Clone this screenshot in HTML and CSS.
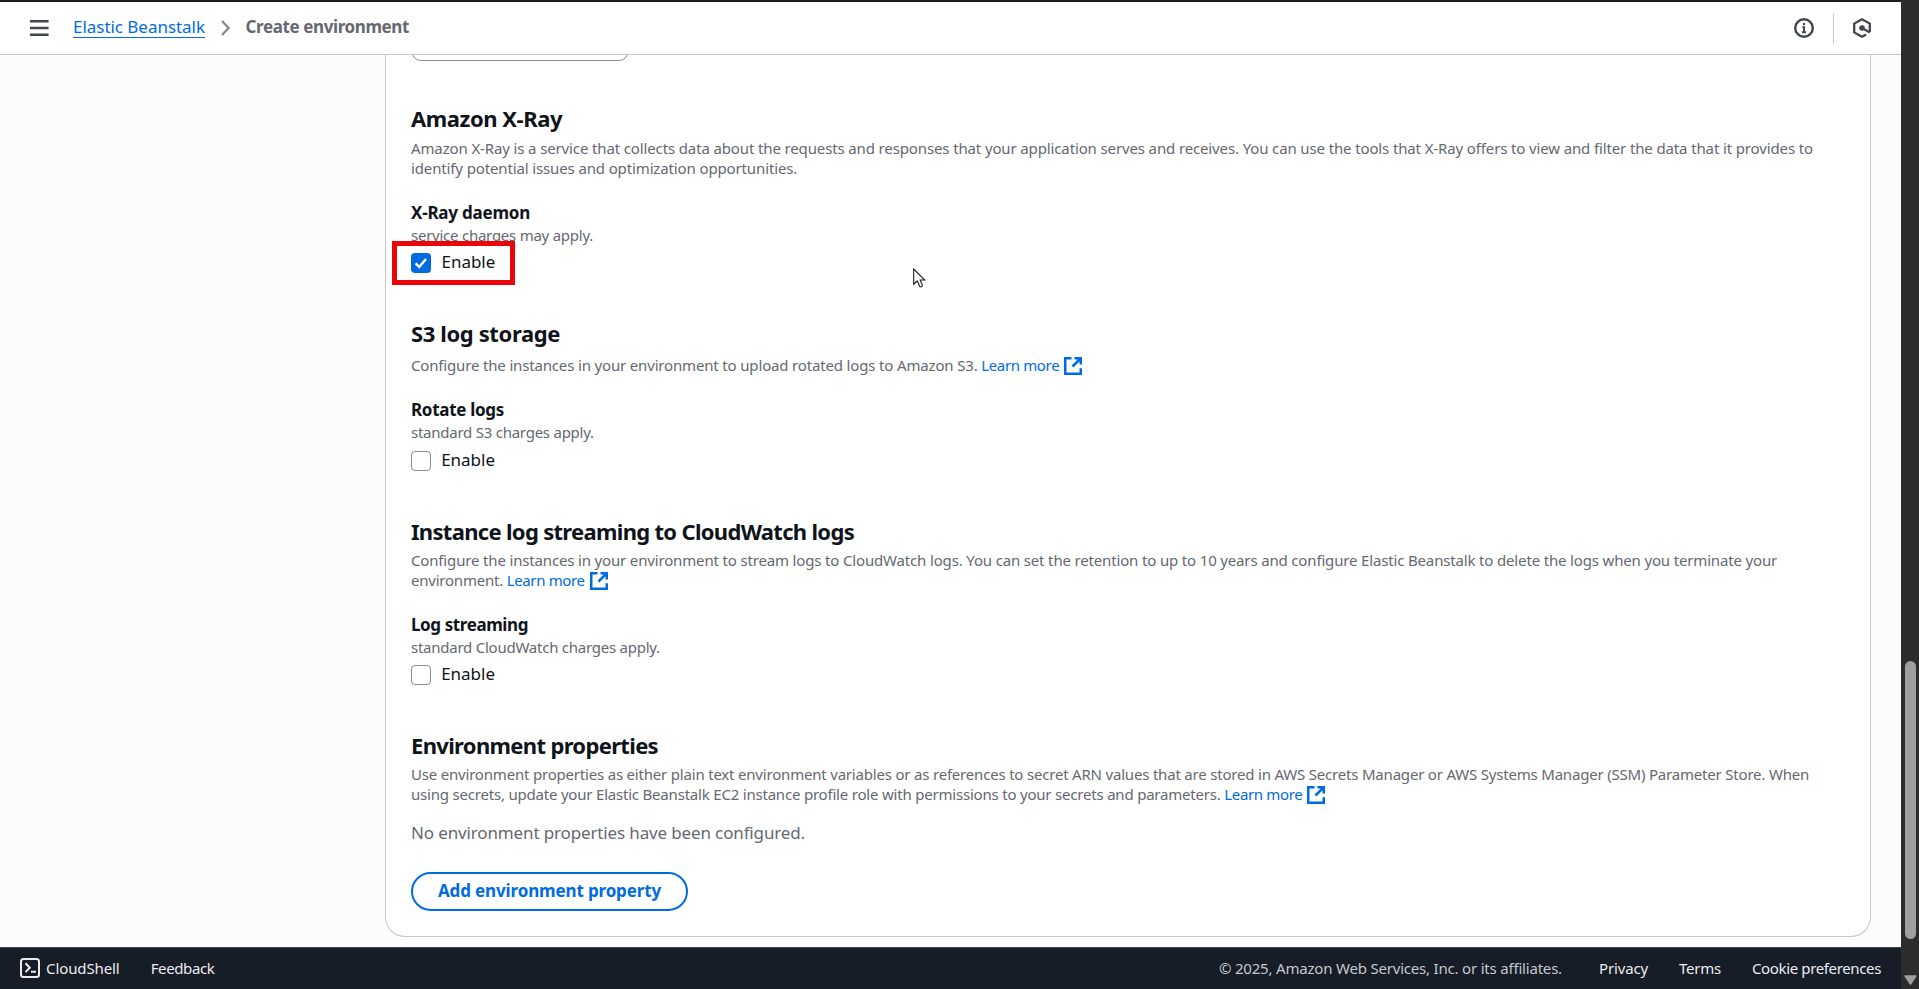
FILE: index.html
```html
<!DOCTYPE html>
<html lang="en">
<head>
<meta charset="utf-8">
<title>Create environment</title>
<link rel="stylesheet" href="styles.css">
</head>
<body>
<svg class="defs" width="0" height="0">
  <symbol id="external" viewBox="0 0 18 18">
    <path d="M7.5 1.25H1.25v15.5h15.5v-5.5M10.5 1.25h6.25V7.5M16.5 1.5 8.5 9.5" fill="none" stroke="currentColor" stroke-width="2.5"/>
  </symbol>
</svg>
<div class="app">
  <div class="page">
    <header class="topbar">
      <svg class="menu" viewBox="0 0 19 16"><path d="M0 1.25h18.6M0 8h18.6M0 14.75h18.6" stroke="#424650" stroke-width="2.3"/></svg>
      <a class="crumb" href="#">Elastic Beanstalk</a>
      <svg class="chevron" viewBox="0 0 11 16"><path d="M2 1l6.5 7L2 15" fill="none" stroke="#8c8c94" stroke-width="2.5"/></svg>
      <span class="crumb-current">Create environment</span>
      <div class="tools">
        <svg class="tool" viewBox="0 0 20 20"><circle cx="10" cy="10" r="8.8" fill="none" stroke="#424650" stroke-width="2.4"/><path d="M10 5v2.2M8.3 9.2H10.1v5.6M8 14.2h4" fill="none" stroke="#424650" stroke-width="2"/></svg>
        <span class="divider"></span>
        <svg class="tool hex" viewBox="0 0 20 20"><path d="M17.8 14V5.6L10 1.3 2.2 5.6v8.8l7.8 4.3 4.2-2.3M10 10l7.8 4.4" fill="none" stroke="#424650" stroke-width="2.3"/><circle cx="10" cy="10" r="2.8" fill="#424650"/></svg>
      </div>
    </header>
    <main class="content">
      <div class="card">
        <div class="select-end"><div class="select"></div></div>

        <section class="first">
          <h2 class="h-xray">Amazon X-Ray</h2>
          <p class="desc">
            <span class="line l1">Amazon X-Ray is a service that collects data about the requests and responses that your application serves and receives. You can use the tools that X-Ray offers to view and filter the data that it provides to</span>
            <span class="line l1">identify potential issues and optimization opportunities.</span>
          </p>
          <h3 class="t-daemon">X-Ray daemon</h3>
          <p class="hint">service charges may apply.</p>
          <label class="check"><span class="box on"><svg viewBox="0 0 20 20"><path d="M4.6 10.4l3.6 3.6L15 6" fill="none" stroke="#fff" stroke-width="2.5"/></svg></span>Enable<i class="highlight"></i></label>
        </section>

        <section class="storage">
          <h2 class="h-storage">S3 log storage</h2>
          <p class="desc">
            <span class="line l2">Configure the instances in your environment to upload rotated logs to Amazon S3. <a href="#">Learn more<svg class="ext"><use href="#external"/></svg></a></span>
          </p>
          <h3 class="t-rotate">Rotate logs</h3>
          <p class="hint">standard S3 charges apply.</p>
          <label class="check"><span class="box"></span>Enable</label>
        </section>

        <section class="streaming">
          <h2 class="h-stream">Instance log streaming to CloudWatch logs</h2>
          <p class="desc">
            <span class="line l3">Configure the instances in your environment to stream logs to CloudWatch logs. You can set the retention to up to 10 years and configure Elastic Beanstalk to delete the logs when you terminate your</span>
            <span class="line l6">environment. <a href="#">Learn more<svg class="ext"><use href="#external"/></svg></a></span>
          </p>
          <h3 class="t-stream">Log streaming</h3>
          <p class="hint">standard CloudWatch charges apply.</p>
          <label class="check"><span class="box"></span>Enable</label>
        </section>

        <section class="props">
          <h2 class="h-props">Environment properties</h2>
          <p class="desc">
            <span class="line l4">Use environment properties as either plain text environment variables or as references to secret ARN values that are stored in AWS Secrets Manager or AWS Systems Manager (SSM) Parameter Store. When</span>
            <span class="line l5">using secrets, update your Elastic Beanstalk EC2 instance profile role with permissions to your secrets and parameters. <a href="#">Learn more<svg class="ext"><use href="#external"/></svg></a></span>
          </p>
          <p class="empty">No environment properties have been configured.</p>
          <button class="add" type="button">Add environment property</button>
        </section>
      </div>
      <svg class="cursor" viewBox="0 0 13 20"><path d="M.7 1v15.2l3.5-3.2 2.6 5.6c1.4.5 2.4 0 2.6-1.2L7.2 12h4.6z" fill="#fff" stroke="#1a1a24" stroke-width="1.1"/></svg>
    </main>
    <footer class="footer">
      <svg class="shell" viewBox="0 0 20 20"><rect x="1" y="1" width="18" height="18" rx="2.5" fill="none" stroke="#ebebf0" stroke-width="2"/><path d="M5.5 5.3l4.3 4.4-4.3 4.4M11 13.8h5" fill="none" stroke="#ebebf0" stroke-width="2"/></svg>
      <a class="f-shell">CloudShell</a>
      <a class="f-feedback">Feedback</a>
      <span class="copy">© 2025, Amazon Web Services, Inc. or its affiliates.</span>
      <a class="f-privacy">Privacy</a>
      <a class="f-terms">Terms</a>
      <a class="f-cookie">Cookie preferences</a>
    </footer>
  </div>
  <div class="scrollbar">
    <div class="thumb"></div>
    <svg class="down" viewBox="0 0 13 10"><path d="M1.2 1h10.6L6.5 9z" fill="#9f9f9f" stroke="#9f9f9f" stroke-width="1.6" stroke-linejoin="round"/></svg>
  </div>
</div>
</body>
</html>
```

FILE: styles.css
```css
* { box-sizing: border-box; }
body, h2, h3, p { margin: 0; }
body {
  font-family: "Noto Sans", "Open Sans", sans-serif;
  font-size: 17px;
  color: #0f141a;
  background: #fcfcfd;
  overflow: hidden;
}
a { color: #006ce0; text-decoration: none; }
.defs { position: absolute; }
.app { display: flex; width: 1919px; height: 989px; }
.page { display: flex; flex-direction: column; width: 1901px; }

.topbar {
  display: flex;
  align-items: center;
  height: 55px;
  padding-left: 30px;
  border-top: 2px solid #1b1c28;
  border-bottom: 1px solid #c6c6cd;
  background: #fff;
  white-space: nowrap;
}
.menu { width: 19px; height: 16px; margin-right: 24px; }
.crumb {
  height: 21px;
  line-height: 19px;
  border-bottom: 1px solid #006ce0;
  letter-spacing: -.034px;
  margin-top: -1px;
}
.chevron { width: 11px; height: 16px; margin: 0 15px 0 14.5px; }
.crumb-current { font-weight: 700; color: #656871; line-height: 20px; letter-spacing: -.39px; margin-top: -2px; }
.tools { display: flex; align-items: center; margin-left: auto; padding-right: 29px; }
.tool { width: 20px; height: 20px; }
.divider { width: 1px; height: 31px; margin: 0 18px 0 19px; background: #c6c6cd; }

.content { position: relative; height: 892px; padding-left: 385px; }
.card {
  width: 1486px;
  height: 882px;
  padding: 0 25px;
  background: #fff;
  border: 1px solid #c6c6cd;
  border-top: 0;
  border-radius: 0 0 20px 20px;
}
.select-end { display: flex; align-items: flex-end; width: 218px; height: 6px; overflow: hidden; }
.select { flex: none; width: 218px; height: 40px; border: 1px solid #8c8c94; border-radius: 10px; }
.first { margin-top: 43px; }
.storage, .streaming, .props { margin-top: 46px; }

h2 { font-size: 22px; font-weight: 700; line-height: 28px; white-space: nowrap; }
.h-xray { letter-spacing: -.452px; }
.h-storage { letter-spacing: -.379px; }
.h-stream { letter-spacing: -.687px; }
.h-props { letter-spacing: -.663px; }

.desc { margin-top: 5px; font-size: 15px; line-height: 20px; color: #656871; }
.first .desc { margin-top: 6px; }
.storage .desc { margin-top: 8px; }
.line { display: block; height: 20px; white-space: nowrap; }
.line a { letter-spacing: -.356px; }
.l1 { letter-spacing: -.131px; }
.l2 { letter-spacing: -.162px; }
.l3 { letter-spacing: -.159px; }
.l4 { letter-spacing: -.195px; }
.l5 { letter-spacing: -.202px; }
.l6 { letter-spacing: -.22px; }
.ext { width: 18px; height: 18px; margin-left: 5px; vertical-align: -4px; }

h3 { margin-top: 24px; font-size: 17px; font-weight: 700; line-height: 22px; letter-spacing: -.218px; }
.t-rotate { letter-spacing: -.296px; }
.t-stream { letter-spacing: -.404px; }
.hint { margin-top: 1px; font-size: 15px; line-height: 20px; letter-spacing: -.245px; color: #656871; }

.check { position: relative; display: flex; gap: 10.5px; width: 84px; margin-top: 8px; line-height: 18px; height: 20px; letter-spacing: -.02px; }
.storage .check { margin-top: 9px; }
.box { width: 20px; height: 20px; border: 1px solid #8c8c94; border-radius: 4px; background: #fff; }
.box.on { border: 0; background: #006ce0; }
.box svg { display: block; width: 20px; height: 20px; }
.highlight { position: absolute; left: -19px; top: -12px; width: 123px; height: 44px; border: 5px solid #eb0509; }

.empty { margin-top: 18px; line-height: 22px; letter-spacing: -.14px; color: #656871; }
.add {
  display: block;
  width: 277px;
  height: 39px;
  margin-top: 28px;
  padding: 0 0 2px;
  border: 2px solid #006ce0;
  border-radius: 20px;
  background: #fff;
  color: #006ce0;
  font: 700 17px/22px "Noto Sans", sans-serif;
  letter-spacing: -.14px;
}
.cursor { position: absolute; left: 913px; top: 213px; width: 13px; height: 20px; }

.footer {
  display: flex;
  align-items: center;
  height: 42px;
  padding: 0 20px 1px;
  border-top: 1px solid #424650;
  background: #161d26;
  color: #c6c6cd;
  font-size: 15px;
  line-height: 20px;
  white-space: nowrap;
}
.footer a { color: #ebebf0; }
.shell { width: 20px; height: 20px; margin-right: 6px; }
.f-shell { letter-spacing: -.1px; }
.f-feedback { margin-left: 31px; letter-spacing: -.38px; }
.copy { margin-left: auto; letter-spacing: -.196px; }
.f-privacy { margin-left: 37px; letter-spacing: -.146px; }
.f-terms { margin-left: 31px; letter-spacing: -.231px; }
.f-cookie { margin-left: 31px; letter-spacing: -.363px; }

.scrollbar { display: flex; flex-direction: column; align-items: center; width: 18px; padding-top: 661px; background: #2c2c2c; }
.thumb { width: 11px; height: 278px; border-radius: 6px; background: #9f9f9f; }
.down { width: 13px; height: 10px; margin-top: 36px; }
```
